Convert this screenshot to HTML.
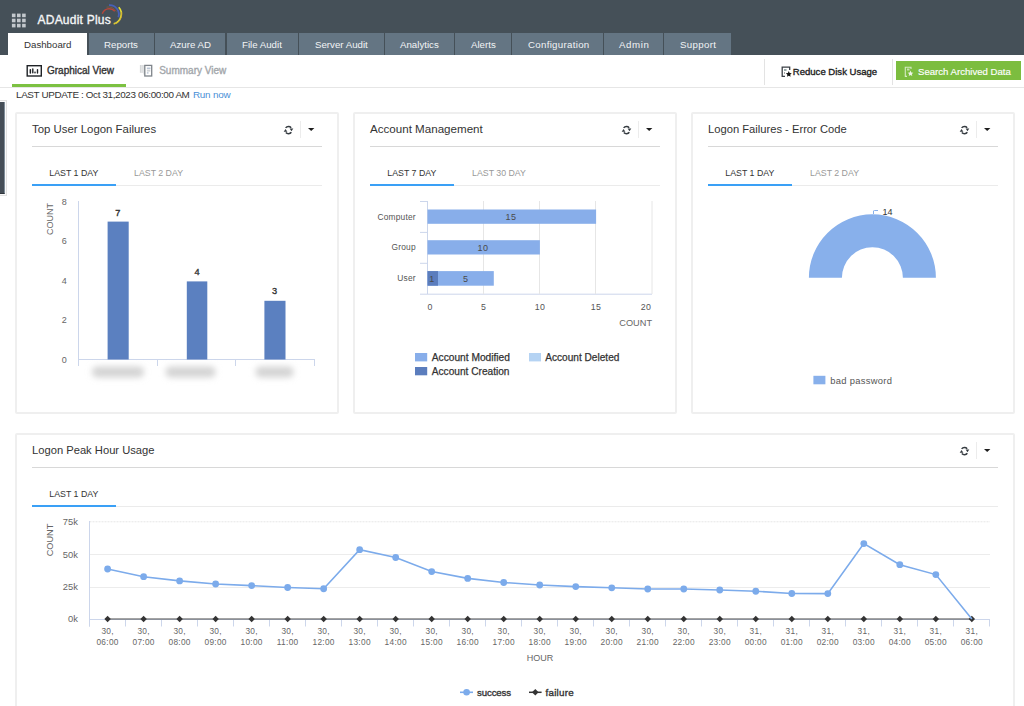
<!DOCTYPE html>
<html><head><meta charset="utf-8">
<style>
*{box-sizing:border-box}
html,body{margin:0;padding:0}
body{width:1024px;height:706px;overflow:hidden;background:#fff;position:relative;font-family:"Liberation Sans",sans-serif;color:#333}
.a{position:absolute}
.t{position:absolute;white-space:nowrap;line-height:1}
.tab{position:absolute;top:33px;height:22px;background:#647583}
.tabt{position:absolute;white-space:nowrap;line-height:1;font-size:9.7px;color:#f2f4f6;top:40px}
.panel{position:absolute;border:2px solid #efefef;border-radius:2px;background:#fff}
.ptitle{font-size:11.2px;color:#333}
.pline{position:absolute;height:1px;background:#d8d8d8}
.ptab{font-size:8.8px;color:#333}
.ptab2{font-size:8.8px;color:#999}
.blue{position:absolute;height:2px;background:#3aa0f6}
.lgray{position:absolute;height:1px;background:#ebebeb}
</style></head>
<body>
<!-- header -->
<div class="a" style="left:0;top:0;width:1024px;height:55px;background:#455058"></div>
<!-- grid icon -->
<svg class="a" style="left:0;top:0" width="40" height="33">
 <g fill="#c3c8cd"><rect x="11.9" y="13.6" width="3.6" height="3.6"/><rect x="17" y="13.6" width="3.6" height="3.6"/><rect x="22.1" y="13.6" width="3.6" height="3.6"/><rect x="11.9" y="18.7" width="3.6" height="3.6"/><rect x="17" y="18.7" width="3.6" height="3.6"/><rect x="22.1" y="18.7" width="3.6" height="3.6"/><rect x="11.9" y="23.8" width="3.6" height="3.6"/><rect x="17" y="23.8" width="3.6" height="3.6"/><rect x="22.1" y="23.8" width="3.6" height="3.6"/></g>
</svg>
<div class="t" style="left:37.5px;top:14px;font-size:12px;letter-spacing:0.23px;color:#f4f5f6;-webkit-text-stroke:0.35px #f4f5f6">ADAudit Plus</div>
<svg class="a" style="left:95px;top:0" width="35" height="30">
 <path d="M11.5 7.2 A 9.5 9.5 0 0 1 21.4 11.5" stroke="#8a5a3a" stroke-width="1" fill="none" opacity="0.8"/>
 <path d="M7.3 13.8 A 7.3 7.3 0 0 1 19.8 11.3" stroke="#b9463a" stroke-width="1.5" fill="none"/>
 <path d="M14 5.2 A 9.2 9.2 0 0 1 23.4 17.2" stroke="#4860b8" stroke-width="1.8" fill="none"/>
 <path d="M23.8 7.2 A 10.2 10.2 0 0 1 18.7 23.8" stroke="#e3de36" stroke-width="1.7" fill="none"/>
 <path d="M26.6 12 A 10.6 10.6 0 0 1 18.7 24.3" stroke="#c9892f" stroke-width="0.7" fill="none" opacity="0.7"/>
</svg>
<!-- tabs -->
<div class="a" style="left:8px;top:33px;width:79px;height:22px;background:#fff"></div>
<div class="tabt" style="left:24px;color:#333">Dashboard</div>
<div class="tab" style="left:89px;width:65px"></div><div class="tabt" style="left:104px">Reports</div>
<div class="tab" style="left:155px;width:70px"></div><div class="tabt" style="left:170px">Azure AD</div>
<div class="tab" style="left:227px;width:71px"></div><div class="tabt" style="left:242px">File Audit</div>
<div class="tab" style="left:299px;width:85px"></div><div class="tabt" style="left:315px">Server Audit</div>
<div class="tab" style="left:385px;width:69px"></div><div class="tabt" style="left:400px">Analytics</div>
<div class="tab" style="left:455px;width:56px"></div><div class="tabt" style="left:471px">Alerts</div>
<div class="tab" style="left:512px;width:91px"></div><div class="tabt" style="letter-spacing:0.3px;left:528px">Configuration</div>
<div class="tab" style="left:604px;width:59px"></div><div class="tabt" style="letter-spacing:0.6px;left:619px">Admin</div>
<div class="tab" style="left:664px;width:67px"></div><div class="tabt" style="letter-spacing:0.35px;left:680px">Support</div>

<!-- sub bar -->
<svg class="a" style="left:26px;top:65px" width="17" height="13">
 <rect x="1.2" y="0.7" width="14.1" height="10.3" fill="none" stroke="#1f2226" stroke-width="1.4"/>
 <rect x="3.6" y="4" width="1.5" height="4.7" rx="0.7" fill="#1f2226"/><rect x="6.1" y="3.3" width="1.4" height="5.1" rx="0.7" fill="#1f2226"/><rect x="8.3" y="6.5" width="1.4" height="1.9" rx="0.6" fill="#1f2226"/><rect x="10.8" y="4" width="1.4" height="4.7" rx="0.7" fill="#1f2226"/>
</svg>
<div class="t" style="left:47px;top:65.5px;font-size:10px;color:#333;-webkit-text-stroke:0.35px #333">Graphical View</div>
<div class="a" style="left:12px;top:84px;width:114px;height:3px;background:#7cc142"></div>
<div class="a" style="left:0;top:87px;width:1024px;height:1px;background:#e6e6e6"></div>
<svg class="a" style="left:139px;top:64px" width="15" height="14">
 <rect x="0.9" y="1" width="3.4" height="7.8" fill="#d6d8da"/><rect x="2.4" y="1" width="1" height="7.8" fill="#eceded"/>
 <rect x="4.6" y="1" width="1" height="9.5" fill="#c9cbcd"/>
 <rect x="5.8" y="1.4" width="6.9" height="10.6" fill="none" stroke="#7f858b" stroke-width="1.3"/>
 <rect x="7.9" y="3.7" width="3.6" height="0.9" fill="#8c9fb8"/><rect x="7.9" y="5.6" width="3.4" height="2" fill="#d0d3d6"/><rect x="7.9" y="8.5" width="1.6" height="0.9" fill="#8c9fb8"/>
</svg>
<div class="t" style="left:159.2px;top:65.5px;font-size:10px;color:#a3a7ab;-webkit-text-stroke:0.35px #a3a7ab">Summary View</div>
<div class="a" style="left:764px;top:59px;width:1px;height:26px;background:#e3e3e3"></div>
<div class="a" style="left:892px;top:59px;width:1px;height:26px;background:#e3e3e3"></div>
<svg class="a" style="left:781px;top:66px" width="12" height="12">
 <path d="M8.7 4 V1.2 H1.2 V10.4 H4" stroke="#3a3f45" stroke-width="1.3" fill="none"/>
 <rect x="3" y="3" width="2.5" height="2" fill="#9aa"/><rect x="3" y="6.5" width="1" height="1" fill="#555"/>
 <path d="M7.80 5.10 L8.65 7.03 L10.75 7.24 L9.18 8.65 L9.62 10.71 L7.80 9.65 L5.98 10.71 L6.42 8.65 L4.85 7.24 L6.95 7.03 Z" fill="#111"/>
</svg>
<div class="t" style="left:792.8px;top:67px;font-size:9.55px;color:#222;-webkit-text-stroke:0.35px #222">Reduce Disk Usage</div>
<div class="a" style="left:896px;top:61px;width:125px;height:19px;background:#7cbd3f"></div>
<svg class="a" style="left:904px;top:66px" width="12" height="12">
 <path d="M7 3 V1.2 H1.3 V10.4 H3" stroke="#d5eac3" stroke-width="1.1" fill="none"/>
 <rect x="3" y="2.5" width="2.5" height="2" fill="#c5e2ad"/>
 <path d="M6.50 4.60 L7.32 6.47 L9.35 6.67 L7.83 8.03 L8.26 10.03 L6.50 9.00 L4.74 10.03 L5.17 8.03 L3.65 6.67 L5.68 6.47 Z" fill="#eef5e8"/>
</svg>
<div class="t" style="left:918px;top:66.8px;font-size:9.6px;color:#fff;-webkit-text-stroke:0.15px #fff">Search Archived Data</div>
<div class="t" style="left:16px;top:90px;font-size:9.9px;letter-spacing:-0.36px;color:#333">LAST UPDATE : Oct 31,2023 06:00:00 AM <span style="color:#4a8fd6;letter-spacing:-0.2px;margin-left:1px">Run now</span></div>
<!-- left strip -->
<div class="a" style="left:-3px;top:102px;width:8px;height:92px;background:#454e57;border-right:1px solid #7f8d99;border-bottom:1px solid #2f353b;box-shadow:0 0 0 1px #fafafa,0 0 0 2px #e2e2e2"></div>

<!-- panels -->
<div class="panel" style="left:15px;top:112px;width:324px;height:302px"></div>
<div class="panel" style="left:353px;top:112px;width:324px;height:302px"></div>
<div class="panel" style="left:691px;top:112px;width:324px;height:302px"></div>
<div class="panel" style="left:15px;top:433px;width:1000px;height:290px"></div>

<!-- HDRS -->
<svg width="0" height="0" style="position:absolute"><defs><g id="rf"><path d="M3.66 3.88 A3.6 3.6 0 0 1 9.18 3.69" stroke="#353b41" stroke-width="1.6" fill="none"/><path d="M7.6 4.5 L11.3 4.5 L9.45 7.3 Z" fill="#353b41"/><path d="M9.34 8.32 A3.6 3.6 0 0 1 3.82 8.51" stroke="#353b41" stroke-width="1.6" fill="none"/><path d="M1.7 7.7 L5.4 7.7 L3.55 4.9 Z" fill="#353b41"/></g></defs></svg>
<div class="t ptitle" style="left:32px;top:124.2px;font-size:11.4px">Top User Logon Failures</div>
<svg class="a" style="left:282px;top:124px" width="12" height="12"><use href="#rf"/></svg>
<div class="a" style="left:300px;top:121px;width:1px;height:17px;background:#ececec"></div>
<svg class="a" style="left:307px;top:127px" width="9" height="6"><path d="M1 1 L7.4 1 L4.2 4.1 Z" fill="#1e1e1e"/></svg>
<div class="pline" style="left:32px;top:146px;width:290px"></div>
<div class="lgray" style="left:32px;top:185px;width:290px"></div>
<div class="blue" style="left:32px;top:184px;width:83.7px"></div>
<div class="t ptab" style="left:49.3px;top:169px">LAST 1 DAY</div>
<div class="t ptab2" style="left:134px;top:169px">LAST 2 DAY</div>
<div class="t ptitle" style="left:370px;top:123.3px;font-size:11.6px">Account Management</div>
<svg class="a" style="left:620px;top:124px" width="12" height="12"><use href="#rf"/></svg>
<div class="a" style="left:638px;top:121px;width:1px;height:17px;background:#ececec"></div>
<svg class="a" style="left:645px;top:127px" width="9" height="6"><path d="M1 1 L7.4 1 L4.2 4.1 Z" fill="#1e1e1e"/></svg>
<div class="pline" style="left:370px;top:146px;width:290px"></div>
<div class="lgray" style="left:370px;top:185px;width:290px"></div>
<div class="blue" style="left:370px;top:184px;width:83.7px"></div>
<div class="t ptab" style="left:387.3px;top:169px">LAST 7 DAY</div>
<div class="t ptab2" style="left:472px;top:169px">LAST 30 DAY</div>
<div class="t ptitle" style="left:708px;top:124.2px;font-size:11.2px">Logon Failures - Error Code</div>
<svg class="a" style="left:958px;top:124px" width="12" height="12"><use href="#rf"/></svg>
<div class="a" style="left:976px;top:121px;width:1px;height:17px;background:#ececec"></div>
<svg class="a" style="left:983px;top:127px" width="9" height="6"><path d="M1 1 L7.4 1 L4.2 4.1 Z" fill="#1e1e1e"/></svg>
<div class="pline" style="left:708px;top:146px;width:290px"></div>
<div class="lgray" style="left:708px;top:185px;width:290px"></div>
<div class="blue" style="left:708px;top:184px;width:83.7px"></div>
<div class="t ptab" style="left:725.3px;top:169px">LAST 1 DAY</div>
<div class="t ptab2" style="left:810px;top:169px">LAST 2 DAY</div>
<div class="t ptitle" style="left:32px;top:445.2px;font-size:11.2px">Logon Peak Hour Usage</div>
<svg class="a" style="left:958px;top:445px" width="12" height="12"><use href="#rf"/></svg>
<div class="a" style="left:976px;top:442px;width:1px;height:17px;background:#ececec"></div>
<svg class="a" style="left:983px;top:448px" width="9" height="6"><path d="M1 1 L7.4 1 L4.2 4.1 Z" fill="#1e1e1e"/></svg>
<div class="pline" style="left:32px;top:467px;width:966px"></div>
<div class="lgray" style="left:32px;top:506px;width:966px"></div>
<div class="blue" style="left:32px;top:505px;width:83.7px"></div>
<div class="t ptab" style="left:49.3px;top:490px">LAST 1 DAY</div>
<!-- /HDRS -->
<!-- CHARTS -->
<svg class="a" style="left:0;top:0" width="1024" height="706" font-family="Liberation Sans">
<defs><filter id="bl" x="-50%" y="-100%" width="200%" height="300%"><feGaussianBlur stdDeviation="3.4"/></filter></defs>
<path d="M78.5 201 V366 M78 359.5 H315 M157.5 359.5 V366 M235.5 359.5 V366 M314.5 359.5 V366" stroke="#ccd6eb" stroke-width="1" fill="none"/>
<text x="64.3" y="362.7" font-size="9" fill="#666" text-anchor="middle" font-weight="normal" >0</text>
<text x="64.3" y="323.2" font-size="9" fill="#666" text-anchor="middle" font-weight="normal" >2</text>
<text x="64.3" y="283.8" font-size="9" fill="#666" text-anchor="middle" font-weight="normal" >4</text>
<text x="64.3" y="244.29999999999998" font-size="9" fill="#666" text-anchor="middle" font-weight="normal" >6</text>
<text x="64.3" y="204.89999999999998" font-size="9" fill="#666" text-anchor="middle" font-weight="normal" >8</text>
<text x="0" y="0" font-size="9" fill="#666" text-anchor="middle" font-weight="normal" transform="translate(53 219) rotate(-90)">COUNT</text>
<rect x="107.6" y="221.6" width="21.099999999999994" height="137.9" fill="#5b80c0"/>
<rect x="186.8" y="281.4" width="20.5" height="78.10000000000002" fill="#5b80c0"/>
<rect x="264.4" y="300.8" width="21.100000000000023" height="58.69999999999999" fill="#5b80c0"/>
<text x="117.9" y="216.1" font-size="9.2" fill="#333" text-anchor="middle" font-weight="normal" stroke="#333" stroke-width="0.35">7</text>
<text x="197" y="275.2" font-size="9.2" fill="#333" text-anchor="middle" font-weight="normal" stroke="#333" stroke-width="0.35">4</text>
<text x="274.6" y="294.2" font-size="9.2" fill="#333" text-anchor="middle" font-weight="normal" stroke="#333" stroke-width="0.35">3</text>
<rect x="92.0" y="366.5" width="52" height="11" rx="5" fill="#d4d4d4" filter="url(#bl)"/>
<rect x="165.6" y="366.5" width="50" height="11" rx="5" fill="#d4d4d4" filter="url(#bl)"/>
<rect x="255.60000000000002" y="366.5" width="38" height="11" rx="5" fill="#d4d4d4" filter="url(#bl)"/>
<path d="M427.5 201 V294 M420 294.2 H652 M420 201.5 H427.5 M420 232.4 H427.5 M420 263.3 H427.5" stroke="#ccd6eb" stroke-width="1" fill="none"/>
<line x1="483.5" y1="201" x2="483.5" y2="294" stroke="#e6e6e6" stroke-width="1"/>
<line x1="539.5" y1="201" x2="539.5" y2="294" stroke="#e6e6e6" stroke-width="1"/>
<line x1="595.5" y1="201" x2="595.5" y2="294" stroke="#e6e6e6" stroke-width="1"/>
<line x1="652" y1="201" x2="652" y2="294" stroke="#e6e6e6" stroke-width="1"/>
<rect x="427.5" y="209.5" width="168.6" height="14.3" fill="#88aeea"/>
<rect x="427.5" y="240.2" width="112.4" height="14.3" fill="#88aeea"/>
<rect x="427.5" y="271.1" width="66.3" height="14.6" fill="#88aeea"/>
<rect x="427.5" y="271.1" width="10.5" height="14.6" fill="#5b7dbd"/>
<text x="415.8" y="219.8" font-size="8.4" fill="#555" text-anchor="end" font-weight="normal" letter-spacing="0.2">Computer</text>
<text x="415.8" y="250.4" font-size="8.4" fill="#555" text-anchor="end" font-weight="normal" letter-spacing="0.2">Group</text>
<text x="415.8" y="281.4" font-size="8.4" fill="#555" text-anchor="end" font-weight="normal" letter-spacing="0.2">User</text>
<text x="511" y="219.7" font-size="9" fill="#4a4a4a" text-anchor="middle" font-weight="normal" letter-spacing="0.4">15</text>
<text x="483" y="250.5" font-size="9" fill="#4a4a4a" text-anchor="middle" font-weight="normal" letter-spacing="0.4">10</text>
<text x="465.8" y="281.7" font-size="9" fill="#4a4a4a" text-anchor="middle" font-weight="normal" letter-spacing="0.4">5</text>
<text x="432" y="281.7" font-size="9" fill="#4a4a4a" text-anchor="middle" font-weight="normal" letter-spacing="0.4">1</text>
<text x="430.2" y="309.5" font-size="8.8" fill="#555" text-anchor="middle" font-weight="normal" letter-spacing="0.4">0</text>
<text x="483.6" y="309.5" font-size="8.8" fill="#555" text-anchor="middle" font-weight="normal" letter-spacing="0.4">5</text>
<text x="540" y="309.5" font-size="8.8" fill="#555" text-anchor="middle" font-weight="normal" letter-spacing="0.4">10</text>
<text x="596" y="309.5" font-size="8.8" fill="#555" text-anchor="middle" font-weight="normal" letter-spacing="0.4">15</text>
<text x="646" y="309.5" font-size="8.8" fill="#555" text-anchor="middle" font-weight="normal" letter-spacing="0.4">20</text>
<text x="652" y="325.90000000000003" font-size="9.2" fill="#666" text-anchor="end" font-weight="normal" >COUNT</text>
<rect x="415" y="353" width="12.2" height="8.4" fill="#88aeea"/>
<rect x="529" y="353" width="12" height="8.4" fill="#b5d3f3"/>
<rect x="415" y="367" width="12.2" height="8.3" fill="#5b7dbd"/>
<text x="431.8" y="360.6" font-size="10.2" fill="#333" text-anchor="start" font-weight="normal" stroke="#333" stroke-width="0.25">Account Modified</text>
<text x="545.3" y="360.6" font-size="10.1" fill="#333" text-anchor="start" font-weight="normal" stroke="#333" stroke-width="0.25">Account Deleted</text>
<text x="431.8" y="375.3" font-size="10.15" fill="#333" text-anchor="start" font-weight="normal" stroke="#333" stroke-width="0.25">Account Creation</text>
<path d="M808.9 277.8 A63.5 63.5 0 0 1 935.9 277.8 L902.9 277.8 A30.5 30.5 0 0 0 841.9 277.8 Z" fill="#88b0eb"/>
<path d="M873.5 214 V211 Q873.5 210.5 874.5 210.5 H878" stroke="#88b0eb" stroke-width="1" fill="none"/>
<text x="882.6" y="215.2" font-size="9" fill="#333" text-anchor="start" font-weight="normal" >14</text>
<rect x="813.4" y="375.8" width="12" height="8.5" fill="#88b0eb"/>
<text x="830.2" y="384.4" font-size="9.4" fill="#555" text-anchor="start" font-weight="normal" letter-spacing="0.3">bad password</text>
<line x1="89.5" y1="521.8" x2="990" y2="521.8" stroke="#e6e6e6" stroke-dasharray="2 1"/>
<line x1="89.5" y1="554.5" x2="990" y2="554.5" stroke="#ececec"/>
<line x1="89.5" y1="587.5" x2="990" y2="587.5" stroke="#ececec"/>
<path d="M89.5 521 V626.5 M89.5 619.5 H990 M89.5 619 V626.5 M125.5 619 V626.5 M161.5 619 V626.5 M197.5 619 V626.5 M233.5 619 V626.5 M269.5 619 V626.5 M305.5 619 V626.5 M341.5 619 V626.5 M377.5 619 V626.5 M413.5 619 V626.5 M449.5 619 V626.5 M485.5 619 V626.5 M521.5 619 V626.5 M557.5 619 V626.5 M593.5 619 V626.5 M629.5 619 V626.5 M665.5 619 V626.5 M701.5 619 V626.5 M737.5 619 V626.5 M773.5 619 V626.5 M809.5 619 V626.5 M845.5 619 V626.5 M881.5 619 V626.5 M917.5 619 V626.5 M953.5 619 V626.5 M989.5 619 V626.5" stroke="#ccd6eb" fill="none"/>
<text x="77.9" y="525.0999999999999" font-size="9.4" fill="#666" text-anchor="end" font-weight="normal" >75k</text>
<text x="77.9" y="557.8" font-size="9.4" fill="#666" text-anchor="end" font-weight="normal" >50k</text>
<text x="77.9" y="590.3" font-size="9.4" fill="#666" text-anchor="end" font-weight="normal" >25k</text>
<text x="77.9" y="622.3" font-size="9.4" fill="#666" text-anchor="end" font-weight="normal" >0k</text>
<text x="0" y="0" font-size="9.2" fill="#666" text-anchor="middle" font-weight="normal" transform="translate(53.3 540) rotate(-90)">COUNT</text>
<path d="M107.6 619 H971.84" stroke="#4a4a4a" stroke-width="1.1"/>
<path d="M107.60 615.8 L110.80 619 L107.60 622.2 L104.40 619 Z" fill="#333"/>
<path d="M143.61 615.8 L146.81 619 L143.61 622.2 L140.41 619 Z" fill="#333"/>
<path d="M179.62 615.8 L182.82 619 L179.62 622.2 L176.42 619 Z" fill="#333"/>
<path d="M215.63 615.8 L218.83 619 L215.63 622.2 L212.43 619 Z" fill="#333"/>
<path d="M251.64 615.8 L254.84 619 L251.64 622.2 L248.44 619 Z" fill="#333"/>
<path d="M287.65 615.8 L290.85 619 L287.65 622.2 L284.45 619 Z" fill="#333"/>
<path d="M323.66 615.8 L326.86 619 L323.66 622.2 L320.46 619 Z" fill="#333"/>
<path d="M359.67 615.8 L362.87 619 L359.67 622.2 L356.47 619 Z" fill="#333"/>
<path d="M395.68 615.8 L398.88 619 L395.68 622.2 L392.48 619 Z" fill="#333"/>
<path d="M431.69 615.8 L434.89 619 L431.69 622.2 L428.49 619 Z" fill="#333"/>
<path d="M467.70 615.8 L470.90 619 L467.70 622.2 L464.50 619 Z" fill="#333"/>
<path d="M503.71 615.8 L506.91 619 L503.71 622.2 L500.51 619 Z" fill="#333"/>
<path d="M539.72 615.8 L542.92 619 L539.72 622.2 L536.52 619 Z" fill="#333"/>
<path d="M575.73 615.8 L578.93 619 L575.73 622.2 L572.53 619 Z" fill="#333"/>
<path d="M611.74 615.8 L614.94 619 L611.74 622.2 L608.54 619 Z" fill="#333"/>
<path d="M647.75 615.8 L650.95 619 L647.75 622.2 L644.55 619 Z" fill="#333"/>
<path d="M683.76 615.8 L686.96 619 L683.76 622.2 L680.56 619 Z" fill="#333"/>
<path d="M719.77 615.8 L722.97 619 L719.77 622.2 L716.57 619 Z" fill="#333"/>
<path d="M755.78 615.8 L758.98 619 L755.78 622.2 L752.58 619 Z" fill="#333"/>
<path d="M791.79 615.8 L794.99 619 L791.79 622.2 L788.59 619 Z" fill="#333"/>
<path d="M827.80 615.8 L831.00 619 L827.80 622.2 L824.60 619 Z" fill="#333"/>
<path d="M863.81 615.8 L867.01 619 L863.81 622.2 L860.61 619 Z" fill="#333"/>
<path d="M899.82 615.8 L903.02 619 L899.82 622.2 L896.62 619 Z" fill="#333"/>
<path d="M935.83 615.8 L939.03 619 L935.83 622.2 L932.63 619 Z" fill="#333"/>
<path d="M971.84 615.8 L975.04 619 L971.84 622.2 L968.64 619 Z" fill="#333"/>
<polyline points="107.60,569 143.61,576.7 179.62,580.9 215.63,584 251.64,585.6 287.65,587.5 323.66,588.75 359.67,549.7 395.68,557.5 431.69,571.6 467.70,578.4 503.71,582.5 539.72,585 575.73,586.6 611.74,587.8 647.75,589 683.76,589 719.77,590 755.78,591.25 791.79,593.5 827.80,593.6 863.81,543.6 899.82,564.7 935.83,574.6 971.84,619" stroke="#7cabeb" stroke-width="1.6" fill="none"/>
<circle cx="107.60" cy="569" r="3.4" fill="#7cabeb"/>
<circle cx="143.61" cy="576.7" r="3.4" fill="#7cabeb"/>
<circle cx="179.62" cy="580.9" r="3.4" fill="#7cabeb"/>
<circle cx="215.63" cy="584" r="3.4" fill="#7cabeb"/>
<circle cx="251.64" cy="585.6" r="3.4" fill="#7cabeb"/>
<circle cx="287.65" cy="587.5" r="3.4" fill="#7cabeb"/>
<circle cx="323.66" cy="588.75" r="3.4" fill="#7cabeb"/>
<circle cx="359.67" cy="549.7" r="3.4" fill="#7cabeb"/>
<circle cx="395.68" cy="557.5" r="3.4" fill="#7cabeb"/>
<circle cx="431.69" cy="571.6" r="3.4" fill="#7cabeb"/>
<circle cx="467.70" cy="578.4" r="3.4" fill="#7cabeb"/>
<circle cx="503.71" cy="582.5" r="3.4" fill="#7cabeb"/>
<circle cx="539.72" cy="585" r="3.4" fill="#7cabeb"/>
<circle cx="575.73" cy="586.6" r="3.4" fill="#7cabeb"/>
<circle cx="611.74" cy="587.8" r="3.4" fill="#7cabeb"/>
<circle cx="647.75" cy="589" r="3.4" fill="#7cabeb"/>
<circle cx="683.76" cy="589" r="3.4" fill="#7cabeb"/>
<circle cx="719.77" cy="590" r="3.4" fill="#7cabeb"/>
<circle cx="755.78" cy="591.25" r="3.4" fill="#7cabeb"/>
<circle cx="791.79" cy="593.5" r="3.4" fill="#7cabeb"/>
<circle cx="827.80" cy="593.6" r="3.4" fill="#7cabeb"/>
<circle cx="863.81" cy="543.6" r="3.4" fill="#7cabeb"/>
<circle cx="899.82" cy="564.7" r="3.4" fill="#7cabeb"/>
<circle cx="935.83" cy="574.6" r="3.4" fill="#7cabeb"/>
<text x="107.60" y="634.2" font-size="8.3" fill="#666" text-anchor="middle" font-weight="normal" letter-spacing="0.3">30,</text>
<text x="107.60" y="644.7" font-size="8.3" fill="#666" text-anchor="middle" font-weight="normal" letter-spacing="0.3">06:00</text>
<text x="143.61" y="634.2" font-size="8.3" fill="#666" text-anchor="middle" font-weight="normal" letter-spacing="0.3">30,</text>
<text x="143.61" y="644.7" font-size="8.3" fill="#666" text-anchor="middle" font-weight="normal" letter-spacing="0.3">07:00</text>
<text x="179.62" y="634.2" font-size="8.3" fill="#666" text-anchor="middle" font-weight="normal" letter-spacing="0.3">30,</text>
<text x="179.62" y="644.7" font-size="8.3" fill="#666" text-anchor="middle" font-weight="normal" letter-spacing="0.3">08:00</text>
<text x="215.63" y="634.2" font-size="8.3" fill="#666" text-anchor="middle" font-weight="normal" letter-spacing="0.3">30,</text>
<text x="215.63" y="644.7" font-size="8.3" fill="#666" text-anchor="middle" font-weight="normal" letter-spacing="0.3">09:00</text>
<text x="251.64" y="634.2" font-size="8.3" fill="#666" text-anchor="middle" font-weight="normal" letter-spacing="0.3">30,</text>
<text x="251.64" y="644.7" font-size="8.3" fill="#666" text-anchor="middle" font-weight="normal" letter-spacing="0.3">10:00</text>
<text x="287.65" y="634.2" font-size="8.3" fill="#666" text-anchor="middle" font-weight="normal" letter-spacing="0.3">30,</text>
<text x="287.65" y="644.7" font-size="8.3" fill="#666" text-anchor="middle" font-weight="normal" letter-spacing="0.3">11:00</text>
<text x="323.66" y="634.2" font-size="8.3" fill="#666" text-anchor="middle" font-weight="normal" letter-spacing="0.3">30,</text>
<text x="323.66" y="644.7" font-size="8.3" fill="#666" text-anchor="middle" font-weight="normal" letter-spacing="0.3">12:00</text>
<text x="359.67" y="634.2" font-size="8.3" fill="#666" text-anchor="middle" font-weight="normal" letter-spacing="0.3">30,</text>
<text x="359.67" y="644.7" font-size="8.3" fill="#666" text-anchor="middle" font-weight="normal" letter-spacing="0.3">13:00</text>
<text x="395.68" y="634.2" font-size="8.3" fill="#666" text-anchor="middle" font-weight="normal" letter-spacing="0.3">30,</text>
<text x="395.68" y="644.7" font-size="8.3" fill="#666" text-anchor="middle" font-weight="normal" letter-spacing="0.3">14:00</text>
<text x="431.69" y="634.2" font-size="8.3" fill="#666" text-anchor="middle" font-weight="normal" letter-spacing="0.3">30,</text>
<text x="431.69" y="644.7" font-size="8.3" fill="#666" text-anchor="middle" font-weight="normal" letter-spacing="0.3">15:00</text>
<text x="467.70" y="634.2" font-size="8.3" fill="#666" text-anchor="middle" font-weight="normal" letter-spacing="0.3">30,</text>
<text x="467.70" y="644.7" font-size="8.3" fill="#666" text-anchor="middle" font-weight="normal" letter-spacing="0.3">16:00</text>
<text x="503.71" y="634.2" font-size="8.3" fill="#666" text-anchor="middle" font-weight="normal" letter-spacing="0.3">30,</text>
<text x="503.71" y="644.7" font-size="8.3" fill="#666" text-anchor="middle" font-weight="normal" letter-spacing="0.3">17:00</text>
<text x="539.72" y="634.2" font-size="8.3" fill="#666" text-anchor="middle" font-weight="normal" letter-spacing="0.3">30,</text>
<text x="539.72" y="644.7" font-size="8.3" fill="#666" text-anchor="middle" font-weight="normal" letter-spacing="0.3">18:00</text>
<text x="575.73" y="634.2" font-size="8.3" fill="#666" text-anchor="middle" font-weight="normal" letter-spacing="0.3">30,</text>
<text x="575.73" y="644.7" font-size="8.3" fill="#666" text-anchor="middle" font-weight="normal" letter-spacing="0.3">19:00</text>
<text x="611.74" y="634.2" font-size="8.3" fill="#666" text-anchor="middle" font-weight="normal" letter-spacing="0.3">30,</text>
<text x="611.74" y="644.7" font-size="8.3" fill="#666" text-anchor="middle" font-weight="normal" letter-spacing="0.3">20:00</text>
<text x="647.75" y="634.2" font-size="8.3" fill="#666" text-anchor="middle" font-weight="normal" letter-spacing="0.3">30,</text>
<text x="647.75" y="644.7" font-size="8.3" fill="#666" text-anchor="middle" font-weight="normal" letter-spacing="0.3">21:00</text>
<text x="683.76" y="634.2" font-size="8.3" fill="#666" text-anchor="middle" font-weight="normal" letter-spacing="0.3">30,</text>
<text x="683.76" y="644.7" font-size="8.3" fill="#666" text-anchor="middle" font-weight="normal" letter-spacing="0.3">22:00</text>
<text x="719.77" y="634.2" font-size="8.3" fill="#666" text-anchor="middle" font-weight="normal" letter-spacing="0.3">30,</text>
<text x="719.77" y="644.7" font-size="8.3" fill="#666" text-anchor="middle" font-weight="normal" letter-spacing="0.3">23:00</text>
<text x="755.78" y="634.2" font-size="8.3" fill="#666" text-anchor="middle" font-weight="normal" letter-spacing="0.3">31,</text>
<text x="755.78" y="644.7" font-size="8.3" fill="#666" text-anchor="middle" font-weight="normal" letter-spacing="0.3">00:00</text>
<text x="791.79" y="634.2" font-size="8.3" fill="#666" text-anchor="middle" font-weight="normal" letter-spacing="0.3">31,</text>
<text x="791.79" y="644.7" font-size="8.3" fill="#666" text-anchor="middle" font-weight="normal" letter-spacing="0.3">01:00</text>
<text x="827.80" y="634.2" font-size="8.3" fill="#666" text-anchor="middle" font-weight="normal" letter-spacing="0.3">31,</text>
<text x="827.80" y="644.7" font-size="8.3" fill="#666" text-anchor="middle" font-weight="normal" letter-spacing="0.3">02:00</text>
<text x="863.81" y="634.2" font-size="8.3" fill="#666" text-anchor="middle" font-weight="normal" letter-spacing="0.3">31,</text>
<text x="863.81" y="644.7" font-size="8.3" fill="#666" text-anchor="middle" font-weight="normal" letter-spacing="0.3">03:00</text>
<text x="899.82" y="634.2" font-size="8.3" fill="#666" text-anchor="middle" font-weight="normal" letter-spacing="0.3">31,</text>
<text x="899.82" y="644.7" font-size="8.3" fill="#666" text-anchor="middle" font-weight="normal" letter-spacing="0.3">04:00</text>
<text x="935.83" y="634.2" font-size="8.3" fill="#666" text-anchor="middle" font-weight="normal" letter-spacing="0.3">31,</text>
<text x="935.83" y="644.7" font-size="8.3" fill="#666" text-anchor="middle" font-weight="normal" letter-spacing="0.3">05:00</text>
<text x="971.84" y="634.2" font-size="8.3" fill="#666" text-anchor="middle" font-weight="normal" letter-spacing="0.3">31,</text>
<text x="971.84" y="644.7" font-size="8.3" fill="#666" text-anchor="middle" font-weight="normal" letter-spacing="0.3">06:00</text>
<text x="540" y="660.8" font-size="9" fill="#666" text-anchor="middle" font-weight="normal" >HOUR</text>
<line x1="460" y1="692.3" x2="473" y2="692.3" stroke="#7cabeb" stroke-width="1.6"/><circle cx="466.6" cy="692.3" r="3.3" fill="#7cabeb"/>
<line x1="529" y1="692.3" x2="541.6" y2="692.3" stroke="#333" stroke-width="1.5"/><path d="M535.3 689 L538.6 692.3 L535.3 695.6 L532 692.3 Z" fill="#333"/>
<text x="477" y="695.8" font-size="9.6" fill="#333" text-anchor="start" font-weight="normal" letter-spacing="-0.1" stroke="#333" stroke-width="0.35">success</text>
<text x="545.5" y="695.8" font-size="9.8" fill="#333" text-anchor="start" font-weight="normal" letter-spacing="0.25" stroke="#333" stroke-width="0.35">failure</text>
</svg>
<!-- /CHARTS -->
</body></html>
